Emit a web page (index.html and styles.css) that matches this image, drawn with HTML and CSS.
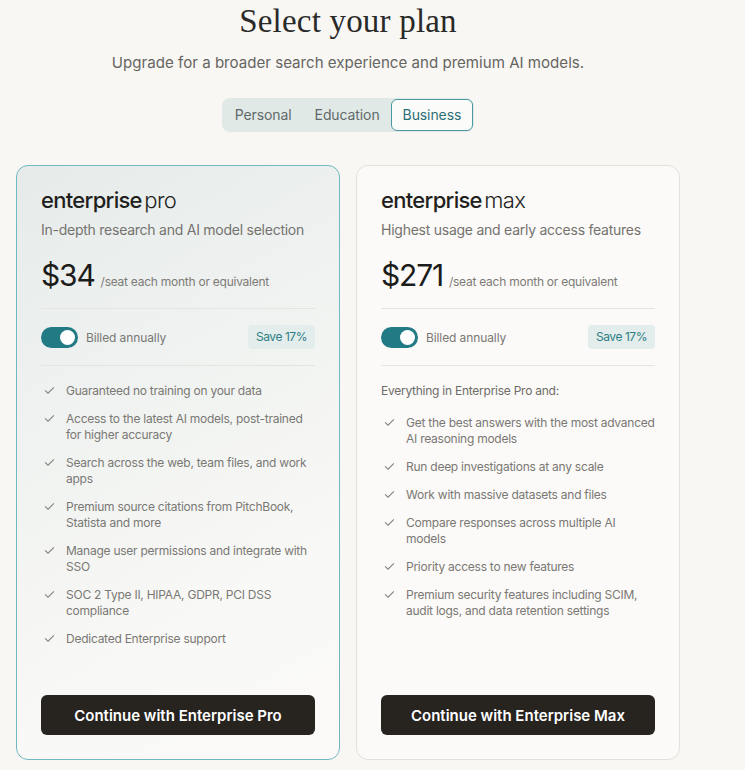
FILE: index.html
```html
<!DOCTYPE html>
<html lang="en">
<head>
<meta charset="utf-8">
<title>Select your plan</title>
<link rel="stylesheet" href="styles.css">
</head>
<body>
<main class="page">
  <h1 class="title">Select your plan</h1>
  <p class="subtitle">Upgrade for a broader search experience and premium AI models.</p>
  <div class="tabs-wrap">
    <div class="tabs">
      <span class="tab">Personal</span>
      <span class="tab">Education</span>
      <span class="tab active">Business</span>
    </div>
  </div>
  <div class="cards">
    <section class="card card-pro">
      <h2 class="plan"><span class="plan-main">enterprise</span> <span class="plan-sub">pro</span></h2>
      <p class="desc">In-depth research and AI model selection</p>
      <div class="price-row"><span class="price">$34</span><span class="per">/seat each month or equivalent</span></div>
      <div class="sep"></div>
      <div class="billing">
        <span class="toggle"><span class="knob"></span></span>
        <span class="billed">Billed annually</span>
        <span class="save">Save 17%</span>
      </div>
      <div class="sep"></div>
      <ul class="features">
        <li><svg class="check" viewBox="0 0 12 12"><path d="M1.5 6.2 4.4 9 10.5 2.8"/></svg><span>Guaranteed no training on your data</span></li>
        <li><svg class="check" viewBox="0 0 12 12"><path d="M1.5 6.2 4.4 9 10.5 2.8"/></svg><span>Access to the latest AI models, post-trained for higher accuracy</span></li>
        <li><svg class="check" viewBox="0 0 12 12"><path d="M1.5 6.2 4.4 9 10.5 2.8"/></svg><span>Search across the web, team files, and work apps</span></li>
        <li><svg class="check" viewBox="0 0 12 12"><path d="M1.5 6.2 4.4 9 10.5 2.8"/></svg><span>Premium source citations from PitchBook, Statista and more</span></li>
        <li><svg class="check" viewBox="0 0 12 12"><path d="M1.5 6.2 4.4 9 10.5 2.8"/></svg><span>Manage user permissions and integrate with SSO</span></li>
        <li><svg class="check" viewBox="0 0 12 12"><path d="M1.5 6.2 4.4 9 10.5 2.8"/></svg><span>SOC 2 Type II, HIPAA, GDPR, PCI DSS compliance</span></li>
        <li><svg class="check" viewBox="0 0 12 12"><path d="M1.5 6.2 4.4 9 10.5 2.8"/></svg><span>Dedicated Enterprise support</span></li>
      </ul>
      <button class="cta">Continue with Enterprise Pro</button>
    </section>
    <section class="card card-max">
      <h2 class="plan"><span class="plan-main">enterprise</span> <span class="plan-sub">max</span></h2>
      <p class="desc">Highest usage and early access features</p>
      <div class="price-row"><span class="price">$271</span><span class="per">/seat each month or equivalent</span></div>
      <div class="sep"></div>
      <div class="billing">
        <span class="toggle"><span class="knob"></span></span>
        <span class="billed">Billed annually</span>
        <span class="save">Save 17%</span>
      </div>
      <div class="sep"></div>
      <p class="intro">Everything in Enterprise Pro and:</p>
      <ul class="features">
        <li><svg class="check" viewBox="0 0 12 12"><path d="M1.5 6.2 4.4 9 10.5 2.8"/></svg><span>Get the best answers with the most advanced AI reasoning models</span></li>
        <li><svg class="check" viewBox="0 0 12 12"><path d="M1.5 6.2 4.4 9 10.5 2.8"/></svg><span>Run deep investigations at any scale</span></li>
        <li><svg class="check" viewBox="0 0 12 12"><path d="M1.5 6.2 4.4 9 10.5 2.8"/></svg><span>Work with massive datasets and files</span></li>
        <li><svg class="check" viewBox="0 0 12 12"><path d="M1.5 6.2 4.4 9 10.5 2.8"/></svg><span>Compare responses across multiple AI models</span></li>
        <li><svg class="check" viewBox="0 0 12 12"><path d="M1.5 6.2 4.4 9 10.5 2.8"/></svg><span>Priority access to new features</span></li>
        <li><svg class="check" viewBox="0 0 12 12"><path d="M1.5 6.2 4.4 9 10.5 2.8"/></svg><span>Premium security features including SCIM, audit logs, and data retention settings</span></li>
      </ul>
      <button class="cta">Continue with Enterprise Max</button>
    </section>
  </div>
</main>
</body>
</html>
```

FILE: styles.css
```css
* { box-sizing: border-box; }
html, body { margin: 0; padding: 0; }
body {
  background: #f8f7f4;
  font-family: Inter, "Noto Sans", sans-serif;
  color: #222;
}
.page {
  width: 664px;
  margin-left: 16px;
  display: flex;
  flex-direction: column;
}
.title {
  margin: 0;
  font-family: "Liberation Serif", "DejaVu Serif", serif;
  font-weight: 400;
  font-size: 33px;
  line-height: 43px;
  text-align: center;
  color: #2a2a28;
  letter-spacing: 0.2px;
}
.subtitle {
  margin: 10px 0 0;
  text-align: center;
  font-size: 15.1px;
  line-height: 20px;
  color: #666562;
}
.tabs-wrap {
  margin-top: 25px;
  display: flex;
  justify-content: center;
}
.tabs {
  display: flex;
  align-items: center;
  background: #e1e9e7;
  border-radius: 8px;
  padding: 1px;
  height: 34px;
}
.tab {
  font-size: 14px;
  color: #5f6a69;
  padding: 0 10.5px;
  height: 32px;
  line-height: 29px;
  border: 1.5px solid transparent;
  border-radius: 6px;
  letter-spacing: -0.1px;
}
.tab.active {
  background: #fbfbf9;
  border-color: #4b9aa2;
  color: #2b6e77;
}
.cards {
  margin-top: 33px;
  display: flex;
  gap: 16px;
  align-items: stretch;
}
.card {
  width: 324px;
  border-radius: 12px;
  padding: 20px 24px 24px;
  display: flex;
  flex-direction: column;
}
.card-pro {
  border: 1px solid #70b9c1;
  background: linear-gradient(150deg, #e6ebea 0%, #eff2f0 35%, #f8f8f6 70%, #fbfaf8 100%);
}
.card-max {
  border: 1px solid #e3e1dc;
  background: #fbfaf8;
}
.plan {
  margin: 0;
  font-size: 22px;
  line-height: 28px;
  font-weight: 400;
  color: #1f1f1d;
  letter-spacing: -0.7px;
}
.plan-main { font-weight: 450; }
.plan-sub { font-weight: 300; margin-left: -3px; }
.desc {
  margin: 6px 0 0;
  font-size: 14px;
  line-height: 20px;
  color: #75736f;
  letter-spacing: -0.25px;
}
.price-row {
  margin-top: 17px;
  display: flex;
  align-items: baseline;
  gap: 6px;
  height: 36px;
}
.price {
  font-size: 30px;
  line-height: 36px;
  color: #1c1c1a;
  letter-spacing: -1.2px;
}
.per {
  font-size: 12px;
  color: #7d7b77;
  letter-spacing: -0.25px;
}
.sep {
  height: 1px;
  background: #e6e4df;
  margin-top: 15px;
}
.billing {
  margin: 16px 0 16px;
  height: 24px;
  display: flex;
  align-items: center;
}
.billing + .sep { margin-top: 0; }
.toggle {
  width: 37px;
  height: 21px;
  border-radius: 11px;
  background: #217a84;
  position: relative;
  flex: none;
}
.knob {
  position: absolute;
  right: 3px;
  top: 3px;
  width: 15px;
  height: 15px;
  border-radius: 50%;
  background: #fff;
}
.billed {
  margin-left: 8px;
  font-size: 12px;
  color: #7a7875;
  letter-spacing: -0.1px;
}
.save {
  margin-left: auto;
  background: #e2edec;
  color: #2e7d86;
  font-size: 12px;
  line-height: 24px;
  padding: 0 8px;
  border-radius: 4px;
  letter-spacing: -0.45px;
}
.intro {
  margin: 17px 0 0;
  font-size: 12px;
  line-height: 16px;
  color: #6e6c68;
  letter-spacing: -0.25px;
}
.features {
  list-style: none;
  margin: 17px 0 48px;
  padding: 0 0 0 3px;
  display: flex;
  flex-direction: column;
  gap: 12px;
}
.intro + .features { margin-top: 16px; }
.features li {
  display: flex;
  gap: 11px;
  font-size: 12px;
  line-height: 16px;
  color: #7a7874;
  letter-spacing: -0.25px;
}
.check {
  width: 11px;
  height: 11px;
  flex: none;
  margin-top: 2px;
  fill: none;
  stroke: #8a8884;
  stroke-width: 1.2;
  stroke-linecap: round;
  stroke-linejoin: round;
}
.cta {
  margin-top: auto;
  height: 40px;
  border: none;
  border-radius: 6px;
  background: #27231f;
  color: #fff;
  font-family: Inter, "Noto Sans", sans-serif;
  font-size: 15px;
  font-weight: 600;
  cursor: pointer;
}
```
